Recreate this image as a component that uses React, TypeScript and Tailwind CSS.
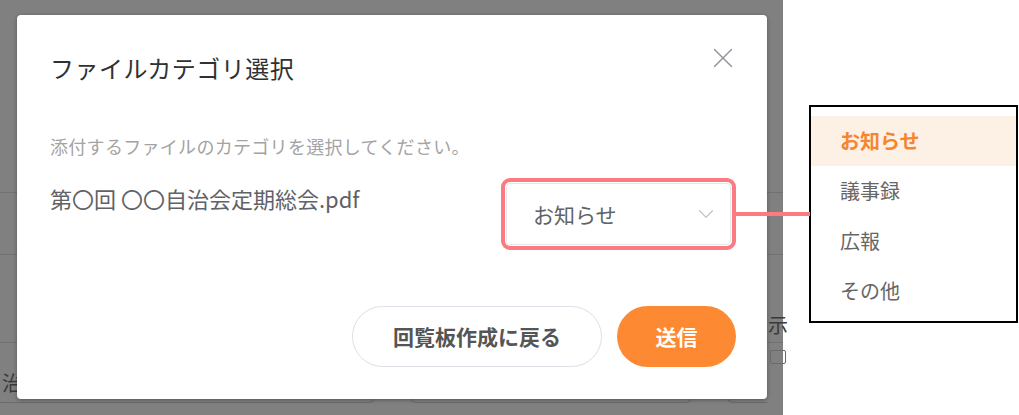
import { X, ChevronDown } from 'lucide-react';

const options = ['お知らせ', '議事録', '広報', 'その他'];

export default function App() {
  return (
    <div
      className="relative flex h-[415px] w-[1019px] overflow-hidden bg-white"
      style={{ fontFamily: '"Noto Sans CJK JP", "Noto Sans", sans-serif' }}
    >
      {/* dimmed page behind the modal */}
      <div className="relative h-[415px] w-[783px] bg-[#808080]">
        <div className="flex flex-col">
          <div className="h-[193px] border-b border-[#727272]" />
          <div className="h-[62px] border-b border-[#727272]" />
          <div className="h-[88px] border-b border-[#727272]" />
          <div className="flex h-[48px] items-start justify-between pt-[28px]">
            <span className="ml-[2px] text-[20px] leading-[24px] text-[#3a3a3a]">治</span>
          </div>
          <div className="flex h-[20px] gap-[35px]">
            <div className="h-[12px] w-[375px] rounded-br-[6px] border-r border-b border-[#6c6c6c]" />
            <div className="h-[12px] w-[282px] rounded-b-[6px] border-x border-b border-[#6c6c6c]" />
            <div className="h-[12px] w-[40px] rounded-bl-[6px] border-l border-b border-[#6c6c6c]" />
          </div>
        </div>
        <span className="absolute left-[768px] top-[313px] text-[20px] leading-[24px] text-[#3a3a3a]">示</span>
        <div className="absolute left-[770px] top-[350px] h-[14px] w-[16px] rounded-[2px] border border-[#6a6a6a]" />

        {/* modal */}
        <div className="absolute left-[17px] top-[15px] flex h-[384px] w-[750px] flex-col rounded-[4px] bg-white pl-[33px] pr-[31px] shadow-[0_1px_4px_rgba(0,0,0,0.35)]">
          <X
            className="absolute right-[27px] top-[26px] text-[#909399]"
            size={34}
            strokeWidth={1}
          />
          <h2 className="pt-[37px] text-[24px] leading-[32px] tracking-[0.5px] text-[#303133]">
            ファイルカテゴリ選択
          </h2>
          <p className="mt-[49px] text-[18px] leading-[26px] tracking-[0.3px] text-[#a3a3a3]">
            添付するファイルのカテゴリを選択してください。
          </p>
          <div className="mt-[19px] flex items-start justify-between">
            <span className="pt-[5px] text-[22px] leading-[30px] text-[#606266]">
              第〇回 〇〇自治会定期総会.pdf
            </span>
            <div className="h-[72px] w-[235px] rounded-[9px] border-4 border-[#fb7b80] p-[1px]">
              <div className="flex h-full items-center justify-between rounded-[4px] border border-[#e4e7ed] pl-[26px] pr-[11px]">
                <span className="text-[21px] leading-[28px] text-[#606266]">お知らせ</span>
                <ChevronDown className="text-[#c0c4cc]" size={26} strokeWidth={1.1} />
              </div>
            </div>
          </div>
          <div className="mt-auto mb-[32px] flex justify-end gap-[15px]">
            <button className="h-[61px] w-[250px] rounded-full border border-[#dcdfe6] bg-white text-[21px] font-bold text-[#555]">
              回覧板作成に戻る
            </button>
            <button className="h-[61px] w-[119px] rounded-full bg-[#fd8a33] text-[21px] font-bold text-white">
              送信
            </button>
          </div>
        </div>
      </div>

      {/* dropdown annotation */}
      <div className="flex-1 pl-[26px] pt-[105px]">
        <div className="h-[218px] w-[209px] border-2 border-black bg-white pt-[9px]">
          {options.map((o, i) => (
            <div
              key={o}
              className={
                i === 0
                  ? 'flex h-[50px] items-center bg-[#fdf1e6] pl-[29px] text-[20px] font-bold text-[#f5862f]'
                  : 'flex h-[50px] items-center pl-[29px] text-[20px] text-[#666]'
              }
            >
              {o}
            </div>
          ))}
        </div>
      </div>

      <div className="absolute left-[736px] top-[212px] h-[4px] w-[74px] bg-[#fb7b80]" />
    </div>
  );
}
